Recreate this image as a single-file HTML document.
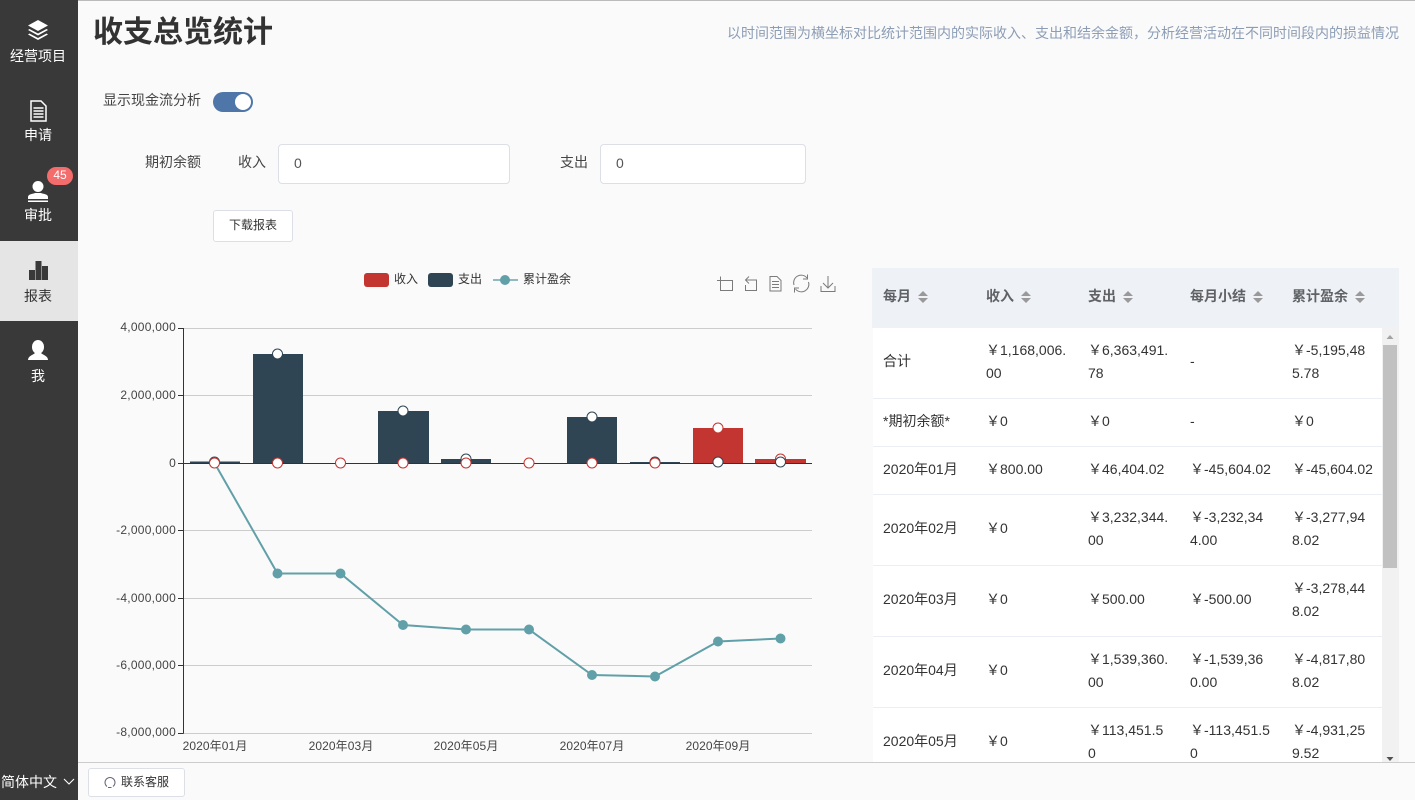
<!DOCTYPE html>
<html><head><meta charset="utf-8"><style>
html,body{margin:0;padding:0}
body{width:1415px;height:800px;overflow:hidden;position:relative;background:#fafafa;font-family:"Liberation Sans","Noto Sans CJK SC",sans-serif;color:#333;font-size:14px}
.a{position:absolute;white-space:nowrap}
.side{left:0;top:0;width:78px;height:800px;background:#393939}
.nav{position:absolute;left:0;width:78px;height:80px;color:#fff;text-align:center}
.nav span{position:absolute;left:-1px;width:78px;top:45px;font-size:14px;line-height:20px}
.nav svg{position:absolute;left:26px;top:18px}
.cell{position:absolute;white-space:nowrap;font-size:14px;line-height:23px;color:#333}
.th{position:absolute;top:286px;font-size:14px;font-weight:bold;color:#606266;line-height:20px;white-space:nowrap}
.rowline{position:absolute;left:873px;width:509px;height:1px;background:#ebeef5}
</style></head><body>
<div class="a" style="left:0;top:0;width:1415px;height:1px;background:#bbb"></div>
<div class="a side"></div>

<div class="nav" style="top:0"><svg width="22" height="22" viewBox="0 0 22 22" style="left:27px;top:19px"><path d="M11 1L21 6.500 11 12 1 6.500Z" fill="#fff"/><path d="M2.500 10L1 11l10 5.500L21 11l-1.500-1L11 14.500Z" fill="#fff"/><path d="M2.500 14.500L1 15.500 11 21l10-5.500-1.500-1L11 19Z" fill="#fff"/></svg><span style="top:46px">经营项目</span></div>
<div class="nav" style="top:80px"><svg width="24" height="22" viewBox="0 0 24 22" style="top:20px"><path d="M5 1H15L20 6V21H5Z" fill="none" stroke="#fff" stroke-width="1.500"/><path d="M7.500 8H17.500M7.500 11H17.500M7.500 14H17.500M7.500 17H17.500" stroke="#fff" stroke-width="1.600"/></svg><span>申请</span></div>
<div class="nav" style="top:160px"><svg width="24" height="24" viewBox="0 0 24 24" style="top:20px"><circle cx="12" cy="6.500" r="5.500" fill="#fff"/><path d="M2 17C2 14 7 14 9 13H15C17 14 22 14 22 17V19H2Z" fill="#fff"/><rect x="2" y="20.500" width="20" height="1.500" fill="#fff"/></svg><span>审批</span></div>
<div class="a" style="left:47px;top:167px;width:26px;height:18px;border-radius:9px;background:#f56c6c;color:#fff;font-size:12px;line-height:17px;text-align:center">45</div>
<div class="nav" style="top:241px;background:#e5e5e5;color:#333"><svg width="24" height="24" viewBox="0 0 24 24" style="top:19px"><rect x="3" y="10" width="6" height="10" fill="#393939"/><rect x="9.500" y="1" width="6" height="19" fill="#393939"/><rect x="16" y="6" width="6" height="14" fill="#393939"/></svg><span>报表</span></div>
<div class="nav" style="top:321px"><svg width="24" height="24" viewBox="0 0 24 24" style="top:19px"><ellipse cx="12" cy="7" rx="6" ry="7" fill="#fff"/><path d="M2 20C2 16 7 15 9 13H15C17 15 22 16 22 20Z" fill="#fff"/></svg><span>我</span></div>
<div class="a" style="left:1px;top:772px;color:#fff;font-size:14px;line-height:20px">简体中文</div>
<svg class="a" style="left:63px;top:778px" width="12" height="8" viewBox="0 0 12 8"><path d="M1 1L6 6 11 1" fill="none" stroke="#fff" stroke-width="1.100"/></svg>

<div class="a" style="left:93px;top:12px;font-size:30px;font-weight:bold;line-height:42px;color:#333">收支总览统计</div>
<div class="a" style="right:16px;top:23px;font-size:14px;line-height:20px;color:#8c9db5">以时间范围为横坐标对比统计范围内的实际收入、支出和结余金额，分析经营活动在不同时间段内的损益情况</div>

<div class="a" style="left:103px;top:90px;line-height:20px;color:#444">显示现金流分析</div>
<div class="a" style="left:213px;top:92px;width:40px;height:20px;border-radius:10px;background:#4f76a8"></div>
<div class="a" style="left:235px;top:94px;width:16px;height:16px;border-radius:8px;background:#fff"></div>

<div class="a" style="left:145px;top:152px;line-height:20px;color:#444">期初余额</div>
<div class="a" style="left:238px;top:152px;line-height:20px;color:#444">收入</div>
<div class="a" style="left:278px;top:144px;width:230px;height:38px;border:1px solid #dcdfe6;border-radius:4px;background:#fff;line-height:36px;text-indent:15px;color:#555">0</div>
<div class="a" style="left:560px;top:152px;line-height:20px;color:#444">支出</div>
<div class="a" style="left:600px;top:144px;width:204px;height:38px;border:1px solid #dcdfe6;border-radius:4px;background:#fff;line-height:36px;text-indent:15px;color:#555">0</div>
<div class="a" style="left:213px;top:210px;width:78px;height:30px;border:1px solid #dcdfe6;border-radius:3px;background:#fff;text-align:center;line-height:28px;font-size:12px;color:#333">下载报表</div>

<svg class="a" style="left:0;top:0" width="870" height="762" viewBox="0 0 870 762">
<rect x="364" y="273" width="25" height="14" rx="3" fill="#c23531"/>
<rect x="428" y="273" width="25" height="14" rx="3" fill="#2f4554"/>
<path d="M493 280H518" stroke="#61a0a8" stroke-width="2" opacity=".7"/><circle cx="505" cy="280" r="5" fill="#61a0a8"/>
<g font-size="12" fill="#333" font-family="'Liberation Sans','Noto Sans CJK SC',sans-serif">
<text x="394" y="283">收入</text><text x="458" y="283">支出</text><text x="523" y="283">累计盈余</text>
</g>
<g fill="none" stroke="#666" stroke-width="1" opacity=".85">
<path d="M717 280.500H732.500V290.500H720.500V276.500"/>
<path d="M749 276.500L745.500 280 749 283.500M745.500 280H756.500V290.500H745.500V285"/>
<path d="M770 276.500H777L781 280.500V291H770ZM772 281.500H779M772 284.500H779M772 287.500H779"/>
<path d="M794 285A7.500 7.500 0 0 1 807 278M808.500 282A7.500 7.500 0 0 1 795.500 289M807.500 274.500V279H803M794.500 292.500V288H799"/>
<path d="M828 276V288M823 283L828 288 833 283M821 286V291.500H835V286"/>
</g>
<g stroke="#ccc" stroke-width="1"><path d="M183 328.500H812M183 395.500H812M183 530.500H812M183 598.500H812M183 665.500H812M183 733.500H812"/></g>
<g fill="#2f4554">
<rect x="190" y="461.500" width="50" height="1.500"/>
<rect x="253" y="354" width="50" height="109"/>
<rect x="378" y="411" width="51" height="52"/>
<rect x="441" y="459" width="50" height="4"/>
<rect x="567" y="417" width="50" height="46"/>
<rect x="630" y="462" width="50" height="1"/>
</g>
<g fill="#c23531"><rect x="693" y="428" width="50" height="35"/><rect x="755" y="459" width="51" height="4"/></g>
<g stroke="#333" stroke-width="1" fill="none"><path d="M183.500 328V733.500M178 328.500H183.500M178 395.500H183.500M178 463.500H183.500M178 530.500H183.500M178 598.500H183.500M178 665.500H183.500M178 733.500H183.500M183 463.500H812"/></g>
<path d="M214.500 463L277.500 573.500 340.500 573.500 403 625 466 629.500 529 629.500 592 675 655 676.500 718 641.500 780.500 638.500" fill="none" stroke="#61a0a8" stroke-width="2"/>
<g fill="#61a0a8"><circle cx="277.500" cy="573.500" r="5"/><circle cx="340.500" cy="573.500" r="5"/><circle cx="403" cy="625" r="5"/><circle cx="466" cy="629.500" r="5"/><circle cx="529" cy="629.500" r="5"/><circle cx="592" cy="675" r="5"/><circle cx="655" cy="676.500" r="5"/><circle cx="718" cy="641.500" r="5"/><circle cx="780.500" cy="638.500" r="5"/></g>
<g fill="#fff" stroke="#2f4554" stroke-width="1"><circle cx="214.500" cy="462" r="5"/><circle cx="277.500" cy="354" r="5"/><circle cx="403" cy="411" r="5"/><circle cx="466" cy="459" r="5"/><circle cx="592" cy="417" r="5"/><circle cx="655" cy="462" r="5"/></g>
<g fill="#fff" stroke="#c23531" stroke-width="1"><circle cx="214.500" cy="463" r="5"/><circle cx="277.500" cy="463" r="5"/><circle cx="340.500" cy="463" r="5"/><circle cx="403" cy="463" r="5"/><circle cx="466" cy="463" r="5"/><circle cx="529" cy="463" r="5"/><circle cx="592" cy="463" r="5"/><circle cx="655" cy="463" r="5"/><circle cx="718" cy="428" r="5"/><circle cx="780.500" cy="459" r="5"/></g>
<g fill="#fff" stroke="#2f4554" stroke-width="1"><circle cx="718" cy="462" r="5"/><circle cx="780.500" cy="462" r="5"/></g>
<g font-size="12" fill="#444" text-anchor="end" letter-spacing=".25" font-family="'Liberation Sans','Noto Sans CJK SC',sans-serif">
<text x="176" y="331">4,000,000</text><text x="176" y="399">2,000,000</text><text x="176" y="467">0</text><text x="176" y="534">-2,000,000</text><text x="176" y="602">-4,000,000</text><text x="176" y="669">-6,000,000</text><text x="176" y="736">-8,000,000</text>
</g>
<g font-size="12" fill="#444" text-anchor="middle" letter-spacing=".1" font-family="'Liberation Sans','Noto Sans CJK SC',sans-serif">
<text x="215" y="750">2020年01月</text><text x="341" y="750">2020年03月</text><text x="466" y="750">2020年05月</text><text x="592" y="750">2020年07月</text><text x="718" y="750">2020年09月</text>
</g>
</svg>

<div class="a" style="left:872px;top:268px;width:527px;height:60px;background:#eef1f6"></div>
<div class="a" style="left:873px;top:328px;width:509px;height:434px;background:#fff"></div>
<div class="a" style="left:1382px;top:328px;width:17px;height:434px;background:#f1f1f1"></div>
<div class="a" style="left:1383px;top:345px;width:14px;height:223px;background:#c1c1c1"></div>
<svg class="a" style="left:1385px;top:333px" width="10" height="8"><path d="M1.500 6H8.500L5 2Z" fill="#a3a3a3"/></svg>
<svg class="a" style="left:1385px;top:755px" width="10" height="7"><path d="M1.500 2H8.500L5 6Z" fill="#505050"/></svg>

<div class="th" style="left:883px">每月</div>
<div class="th" style="left:986px">收入</div>
<div class="th" style="left:1088px">支出</div>
<div class="th" style="left:1190px">每月小结</div>
<div class="th" style="left:1292px">累计盈余</div>
<svg class="a" style="left:0;top:0" width="1415" height="330"><g fill="#999"><path d="M918 296L923 291 928 296ZM918 298L923 303 928 298Z"/><path d="M1021 296L1026 291 1031 296ZM1021 298L1026 303 1031 298Z"/><path d="M1123 296L1128 291 1133 296ZM1123 298L1128 303 1133 298Z"/><path d="M1253 296L1258 291 1263 296ZM1253 298L1258 303 1263 298Z"/><path d="M1355 296L1360 291 1365 296ZM1355 298L1360 303 1365 298Z"/></g></svg>

<div class="rowline" style="top:398px"></div>
<div class="rowline" style="top:446px"></div>
<div class="rowline" style="top:494px"></div>
<div class="rowline" style="top:565px"></div>
<div class="rowline" style="top:636px"></div>
<div class="rowline" style="top:707px"></div>

<div class="cell" style="left:883px;top:350px">合计</div>
<div class="cell" style="left:986px;top:339px">￥1,168,006.<br>00</div>
<div class="cell" style="left:1088px;top:339px">￥6,363,491.<br>78</div>
<div class="cell" style="left:1190px;top:350px">-</div>
<div class="cell" style="left:1292px;top:339px">￥-5,195,48<br>5.78</div>

<div class="cell" style="left:883px;top:410px">*期初余额*</div>
<div class="cell" style="left:986px;top:410px">￥0</div>
<div class="cell" style="left:1088px;top:410px">￥0</div>
<div class="cell" style="left:1190px;top:410px">-</div>
<div class="cell" style="left:1292px;top:410px">￥0</div>

<div class="cell" style="left:883px;top:458px">2020年01月</div>
<div class="cell" style="left:986px;top:458px">￥800.00</div>
<div class="cell" style="left:1088px;top:458px">￥46,404.02</div>
<div class="cell" style="left:1190px;top:458px">￥-45,604.02</div>
<div class="cell" style="left:1292px;top:458px">￥-45,604.02</div>

<div class="cell" style="left:883px;top:517px">2020年02月</div>
<div class="cell" style="left:986px;top:517px">￥0</div>
<div class="cell" style="left:1088px;top:506px">￥3,232,344.<br>00</div>
<div class="cell" style="left:1190px;top:506px">￥-3,232,34<br>4.00</div>
<div class="cell" style="left:1292px;top:506px">￥-3,277,94<br>8.02</div>

<div class="cell" style="left:883px;top:588px">2020年03月</div>
<div class="cell" style="left:986px;top:588px">￥0</div>
<div class="cell" style="left:1088px;top:588px">￥500.00</div>
<div class="cell" style="left:1190px;top:588px">￥-500.00</div>
<div class="cell" style="left:1292px;top:577px">￥-3,278,44<br>8.02</div>

<div class="cell" style="left:883px;top:659px">2020年04月</div>
<div class="cell" style="left:986px;top:659px">￥0</div>
<div class="cell" style="left:1088px;top:648px">￥1,539,360.<br>00</div>
<div class="cell" style="left:1190px;top:648px">￥-1,539,36<br>0.00</div>
<div class="cell" style="left:1292px;top:648px">￥-4,817,80<br>8.02</div>

<div class="cell" style="left:883px;top:730px">2020年05月</div>
<div class="cell" style="left:986px;top:730px">￥0</div>
<div class="cell" style="left:1088px;top:719px">￥113,451.5<br>0</div>
<div class="cell" style="left:1190px;top:719px">￥-113,451.5<br>0</div>
<div class="cell" style="left:1292px;top:719px">￥-4,931,25<br>9.52</div>

<div class="a" style="left:78px;top:762px;width:1337px;height:38px;background:#fafafa;border-top:1px solid #ccc;box-sizing:border-box"></div>
<div class="a" style="left:88px;top:768px;width:95px;height:27px;border:1px solid #dcdfe6;border-radius:3px;background:#fff"></div>
<svg class="a" style="left:103px;top:774px" width="14" height="15" viewBox="0 0 14 15"><path d="M4 12.500A5 5 0 1 1 10 12.500M5 13.500H8.500" fill="none" stroke="#667" stroke-width="1"/></svg>
<div class="a" style="left:121px;top:772px;font-size:12px;line-height:20px;color:#333">联系客服</div>
</body></html>
